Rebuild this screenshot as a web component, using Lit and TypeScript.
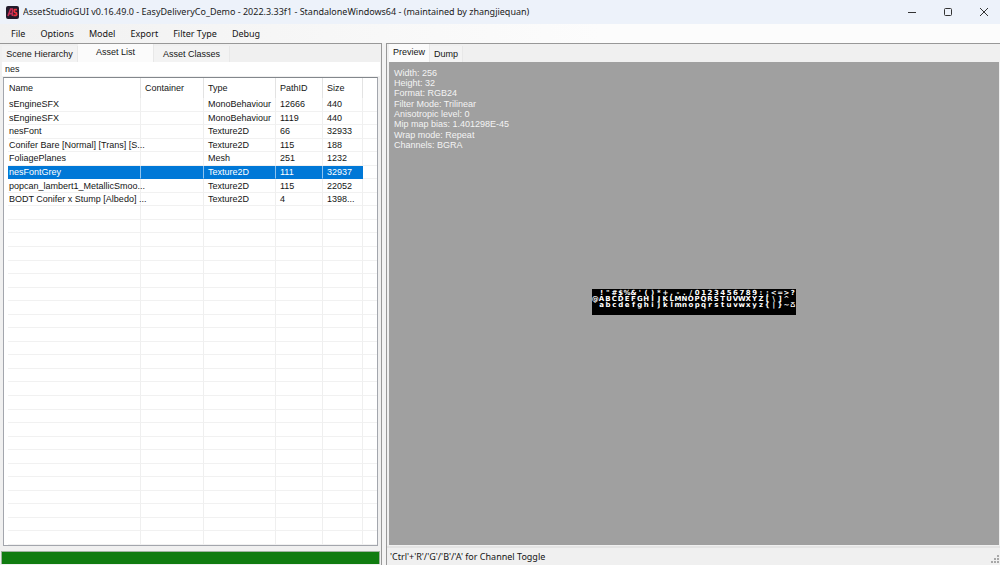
import { LitElement, html, css } from "lit";
import { customElement, state } from "lit/decorators.js";
import { classMap } from "lit/directives/class-map.js";

const MENUS = ["File", "Options", "Model", "Export", "Filter Type", "Debug"];

const ASSETS = [
  ["sEngineSFX", "", "MonoBehaviour", "12666", "440"],
  ["sEngineSFX", "", "MonoBehaviour", "1119", "440"],
  ["nesFont", "", "Texture2D", "66", "32933"],
  ["Conifer Bare [Normal] [Trans] [S...", "", "Texture2D", "115", "188"],
  ["FoliagePlanes", "", "Mesh", "251", "1232"],
  ["nesFontGrey", "", "Texture2D", "111", "32937"],
  ["popcan_lambert1_MetallicSmoo...", "", "Texture2D", "115", "22052"],
  ["BODT Conifer x Stump [Albedo] ...", "", "Texture2D", "4", "1398..."],
];
const TOTAL_ROWS = 33;

const INFO = [
  "Width: 256",
  "Height: 32",
  "Format: RGB24",
  "Filter Mode: Trilinear",
  "Anisotropic level: 0",
  "Mip map bias: 1.401298E-45",
  "Wrap mode: Repeat",
  "Channels: BGRA",
];

const GLYPHS = [
  " !\"#$%&'()*+,-./0123456789:;<=>?",
  "@ABCDEFGHIJKLMNOPQRSTUVWXYZ[\\]^_",
  "`abcdefghijklmnopqrstuvwxyz{|}~\u2302",
];

@customElement("title-bar")
export class TitleBar extends LitElement {
  static styles = css`
    :host {
      display: flex;
      align-items: center;
      height: 24px;
      background: #edf2fa;
      color: #1b1b1b;
      font: 9px/14px "Noto Sans", sans-serif;
    }
    .logo {
      flex: none;
      width: 13px;
      height: 13px;
      margin: 0 4px 0 6px;
    }
    .title {
      flex: 1;
      font: inherit;
      margin: 0;
      white-space: nowrap;
      overflow: hidden;
    }
    .win {
      width: 36px;
      height: 24px;
      border: 0;
      padding: 0;
      background: none;
      display: grid;
      place-items: center;
    }
    .win svg {
      width: 10px;
      height: 10px;
      fill: none;
      stroke: #333;
      stroke-width: 1;
    }
    .last {
      margin-right: -2px;
    }
  `;
  render() {
    return html`
      <svg class="logo" viewBox="0 0 13 13" aria-hidden="true">
        <rect width="13" height="13" rx="2" fill="#221b2b" />
        <path d="M2 10 L4.6 3 H6.4 V10 M3.4 7.6 H6.4" fill="none" stroke="#c33058" stroke-width="1.6" />
        <path d="M11 3.6 H8.6 Q7.6 5 8.6 6.2 L10.4 7 Q11.2 8.6 10 9.4 H7.4" fill="none" stroke="#f0303c" stroke-width="1.7" />
      </svg>
      <h1 class="title">AssetStudioGUI v0.16.49.0 - EasyDeliveryCo_Demo - 2022.3.33f1 - StandaloneWindows64 - (maintained by zhangjiequan)</h1>
      <button class="win" aria-label="Minimize">
        <svg viewBox="0 0 10 10"><path d="M1 5.5 H9" /></svg>
      </button>
      <button class="win" aria-label="Maximize">
        <svg viewBox="0 0 10 10"><rect x="1.5" y="1.5" width="7" height="7" rx="1" /></svg>
      </button>
      <button class="win last" aria-label="Close">
        <svg viewBox="0 0 10 10"><path d="M1 1 L9 9 M9 1 L1 9" /></svg>
      </button>
    `;
  }
}

@customElement("asset-table")
export class AssetTable extends LitElement {
  @state() private selected = 5;

  static styles = css`
    :host {
      display: flex;
      box-sizing: border-box;
      border: 1px solid #a3a6ad;
      border-top-color: #83878c;
      background: #fff;
      padding: 0 0 0 4px;
      font: 9px/12px "Liberation Sans", Arial, sans-serif;
      color: #151515;
    }
    table {
      flex: 1;
      display: flex;
      flex-direction: column;
    }
    tr {
      display: grid;
      grid-template-columns: 133px 63px 72px 47px 40px 1fr;
      align-items: stretch;
    }
    thead tr {
      height: 20px;
    }
    tbody {
      flex: 1;
      display: grid;
      grid-auto-rows: 1fr;
    }
    th,
    td {
      padding: 0;
      text-align: left;
      font-weight: normal;
      white-space: nowrap;
      border-right: 1px solid #efefef;
      display: flex;
      align-items: center;
    }
    th {
      border-color: #e3e3e3;
    }
    th:first-child,
    td:first-child {
      padding-left: 1px;
    }
    th:not(:first-child),
    td:not(:first-child) {
      padding-left: 4px;
    }
    th:last-child,
    td:last-child {
      border-right: 0;
    }
    td {
      border-bottom: 1px solid #f1f1f1;
    }
    .selected td:not(:last-child) {
      background: #0078d7;
      border-right-color: #8fc3ee;
      border-bottom-color: #0078d7;
      color: #fff;
    }
    .selected td:nth-child(5) {
      border-right-color: #0078d7;
    }
  `;
  render() {
    const rows = Array.from({ length: TOTAL_ROWS }, (_, i) => ASSETS[i] ?? ["", "", "", "", ""]);
    return html`
      <table>
        <thead>
          <tr>
            ${["Name", "Container", "Type", "PathID", "Size"].map((h) => html`<th scope="col">${h}</th>`)}
            <th></th>
          </tr>
        </thead>
        <tbody>
          ${rows.map(
            (r, i) => html`<tr
              class=${classMap({ selected: i === this.selected })}
              @click=${() => {
                if (i < ASSETS.length) this.selected = i;
              }}
            >
              ${r.map((c) => html`<td>${c}</td>`)}
              <td></td>
            </tr>`
          )}
        </tbody>
      </table>
    `;
  }
}

@customElement("texture-preview")
export class TexturePreview extends LitElement {
  static styles = css`
    :host {
      display: grid;
      grid-template: 1fr / 1fr;
      background: #a0a0a0;
      font: 9px/10px "Liberation Sans", Arial, sans-serif;
    }
    .info,
    .texture {
      grid-area: 1 / 1;
    }
    .info {
      margin: 0;
      padding: 6px 5px;
      list-style: none;
      color: #f4f4f4;
    }
    .info li {
      height: 10px;
    }
    .info li:nth-child(3n) {
      margin-bottom: 1px;
    }
    .texture {
      place-self: center;
      box-sizing: border-box;
      width: 204px;
      height: 26px;
      margin-bottom: 3px;
      padding-top: 1px;
      background: #000;
      color: #fff;
      overflow: hidden;
      font: bold 7px/6px "DejaVu Sans", sans-serif;
    }
    .line {
      display: grid;
      grid-template-columns: repeat(32, 1fr);
      height: 6px;
    }
    .line span {
      display: flex;
      justify-content: center;
      min-width: 0;
      white-space: pre;
    }
  `;
  render() {
    return html`
      <ul class="info">
        ${INFO.map((t) => html`<li>${t}</li>`)}
      </ul>
      <div class="texture">
        ${GLYPHS.map((l) => html`<div class="line">${[...l].map((c) => html`<span>${c}</span>`)}</div>`)}
      </div>
    `;
  }
}

@customElement("app-root")
export class AppRoot extends LitElement {
  static styles = css`
    :host {
      display: flex;
      flex-direction: column;
      height: 100vh;
      overflow: hidden;
      background: #f0f0f0;
      color: #151515;
      font: 9px/12px "Liberation Sans", Arial, sans-serif;
    }
    button {
      font: inherit;
      color: inherit;
      border: 0;
      padding: 0;
      margin: 0;
      background: none;
      white-space: nowrap;
    }
    .menu {
      display: flex;
      gap: 15px;
      height: 19px;
      padding: 0 11px;
      background: linear-gradient(90deg, #f1f1f1, #fcfcfc 60%);
      font: 9px/14px "Noto Sans", sans-serif;
    }
    .panes {
      flex: 1;
      min-height: 0;
      display: grid;
      grid-template-columns: 382fr 614fr;
      gap: 4px;
      background: #f3f3f3;
    }
    .pane {
      display: flex;
      flex-direction: column;
      min-width: 0;
      min-height: 0;
      background: #f0f0f0;
      border-top: 1px solid #989898;
    }
    .left {
      border-right: 1px solid #989898;
    }
    .right {
      border-left: 1px solid #989898;
    }
    .tabs {
      display: flex;
      align-items: flex-end;
      height: 18px;
      padding-left: 2px;
    }
    .tab {
      height: 16px;
      padding: 0 4px;
      background: #f3f3f3;
      border-right: 1px solid #e8e8e8;
    }
    .left .tab {
      width: 76px;
    }
    .tab.on {
      height: 18px;
      padding-bottom: 2px;
      background: #fbfbfb;
    }
    .search {
      box-sizing: border-box;
      height: 14px;
      margin: 0 1px 1px 2px;
      padding: 0 3px;
      border: 0;
      outline: 0;
      background: #fff;
      font: inherit;
      color: inherit;
    }
    asset-table {
      flex: 1;
      min-height: 0;
      margin: 0 3px 0 3px;
    }
    .progress {
      height: 12px;
      margin: 5px 1px 1px 1px;
      border: 1px solid #9fb39f;
      border-bottom: 0;
      background: #107c10;
    }
    texture-preview {
      flex: 1;
      min-height: 0;
      margin: 0 1px 0 2px;
    }
    .status {
      display: flex;
      align-items: center;
      justify-content: space-between;
      height: 17px;
      margin-top: 1px;
      padding-left: 3px;
      border-top: 2px solid #e4e4e4;
      font: 9px/14px "Noto Sans", sans-serif;
    }
    .grip {
      align-self: flex-end;
      width: 10px;
      height: 12px;
      fill: #a8a8a8;
    }
  `;
  render() {
    return html`
      <title-bar></title-bar>
      <nav class="menu">${MENUS.map((m) => html`<button>${m}</button>`)}</nav>
      <main class="panes">
        <section class="pane left">
          <div class="tabs" role="tablist">
            <button class="tab" role="tab">Scene Hierarchy</button>
            <button class="tab on" role="tab" aria-selected="true">Asset List</button>
            <button class="tab" role="tab">Asset Classes</button>
          </div>
          <input class="search" type="text" aria-label="Filter assets" .value=${"nes"} />
          <asset-table></asset-table>
          <div class="progress" role="progressbar" aria-label="Loading progress" aria-valuenow="100"></div>
        </section>
        <section class="pane right">
          <div class="tabs" role="tablist">
            <button class="tab on" role="tab" aria-selected="true">Preview</button>
            <button class="tab" role="tab">Dump</button>
          </div>
          <texture-preview></texture-preview>
          <footer class="status">
            <span>'Ctrl'+'R'/'G'/'B'/'A' for Channel Toggle</span>
            <svg class="grip" viewBox="0 0 10 12" aria-hidden="true">
              <path d="M7 2h2v2h-2z M4 5h2v2h-2z M7 5h2v2h-2z M1 8h2v2h-2z M4 8h2v2h-2z M7 8h2v2h-2z" />
            </svg>
          </footer>
        </section>
      </main>
    `;
  }
}
